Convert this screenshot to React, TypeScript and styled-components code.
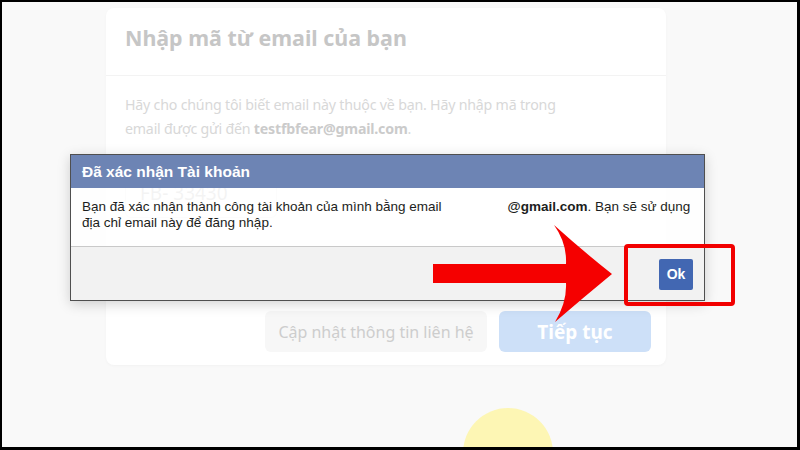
import React from "react";
import styled, { createGlobalStyle } from "styled-components";

const GlobalStyle = createGlobalStyle`
  html, body { margin: 0; padding: 0; background: #fff; }
  * { box-sizing: border-box; }
`;

const Frame = styled.div`
  position: relative;
  width: 800px;
  height: 450px;
  overflow: hidden;
  background: #f9f9f9;
  border-style: solid;
  border-color: #000;
  border-width: 2px 3px 3px 2px;
  font-family: "Noto Sans", "Open Sans", sans-serif;
`;

const Card = styled.div`
  margin: 6px 0 0 104px;
  width: 560px;
  height: 357px;
  background: #fff;
  border-radius: 8px;
  box-shadow: 0 1px 3px rgba(0, 0, 0, 0.03);
  display: flex;
  flex-direction: column;
`;

const CardHeader = styled.div`
  height: 68px;
  padding: 15px 19px 0;
  border-bottom: 1px solid #f3f3f3;
`;

const Heading = styled.h2`
  margin: 0;
  font-size: 21.4px;
  font-weight: 700;
  color: #c6c6c6;
`;

const CardBody = styled.div`
  flex: 1;
  padding: 17px 19px 0;
`;

const Paragraph = styled.p`
  margin: 0;
  font-size: 14.2px;
  letter-spacing: -0.2px;
  line-height: 24px;
  color: #d8d8d8;
  b { color: #cbcbcb; font-weight: 700; }
`;

const CodeInput = styled.div`
  margin-top: 27px;
  width: 152px;
  height: 50px;
  border: 1px solid #ededed;
  border-radius: 6px;
  padding-left: 14px;
  display: flex;
  align-items: center;
  font-size: 19px;
  color: #c4c4c4;
`;

const ButtonRow = styled.div`
  display: flex;
  justify-content: flex-end;
  gap: 12px;
  padding: 0 15px 13px;
`;

const Button = styled.div<{ $primary?: boolean }>`
  height: 41px;
  border-radius: 6px;
  display: flex;
  align-items: center;
  justify-content: center;
  padding: 0 8px;
  width: ${(p) => (p.$primary ? "152px" : "222px")};
  background: ${(p) => (p.$primary ? "#cde0f8" : "#f7f7f7")};
  color: ${(p) => (p.$primary ? "#fff" : "#cdcdcd")};
  font-size: ${(p) => (p.$primary ? "19px" : "16px")};
  font-weight: ${(p) => (p.$primary ? 700 : 400)};
`;

const CircleRow = styled.div`
  margin: 43px 0 0 461px;
`;

const Circle = styled.div`
  width: 90px;
  height: 90px;
  border-radius: 50%;
  background: #fdf6b4;
`;

const Dialog = styled.div`
  position: absolute;
  left: 68px;
  top: 152px;
  width: 635px;
  border: 1px solid #4f4f4f;
  box-shadow: 0 3px 12px rgba(0, 0, 0, 0.18);
  font-family: "Liberation Sans", Arial, sans-serif;
`;

const DialogHeader = styled.div`
  height: 33px;
  background: #6d84b4;
  color: #fff;
  font-size: 15.5px;
  font-weight: 700;
  padding: 0 11px;
  display: flex;
  align-items: center;
`;

const DialogBody = styled.div`
  height: 58px;
  background: rgba(255, 255, 255, 0.8);
  padding: 11px 11px 0;
  font-size: 13.5px;
  line-height: 16px;
  color: #1c1e21;
`;

const Line = styled.div`
  white-space: nowrap;
  b { font-weight: 700; }
`;

const Redacted = styled.span`
  display: inline-block;
  width: 66px;
`;

const DialogFooter = styled.div`
  height: 54px;
  background: #f2f2f2;
  border-top: 1px solid #c9c9c9;
  display: flex;
  align-items: center;
  justify-content: flex-end;
  padding: 0 11px 0 0;
`;

const OkButton = styled.div`
  width: 34px;
  height: 31px;
  background: #4267b2;
  border-radius: 2px;
  color: #fff;
  font-size: 14px;
  font-weight: 700;
  display: flex;
  align-items: center;
  justify-content: center;
  margin-top: 1px;
`;

const Highlight = styled.div`
  position: absolute;
  left: 622px;
  top: 242px;
  width: 111px;
  height: 62px;
  border: 4px solid #f20000;
  border-radius: 4px;
`;

const ArrowLayer = styled.svg`
  position: absolute;
  left: -2px;
  top: -2px;
  pointer-events: none;
`;

export default function App() {
  return (
    <>
      <GlobalStyle />
      <Frame>
        <Card>
          <CardHeader>
            <Heading>Nhập mã từ email của bạn</Heading>
          </CardHeader>
          <CardBody>
            <Paragraph>
              Hãy cho chúng tôi biết email này thuộc về bạn. Hãy nhập mã trong
              <br />
              email được gửi đến <b>testfbfear@gmail.com</b>.
            </Paragraph>
            <CodeInput>FB- 33430</CodeInput>
          </CardBody>
          <ButtonRow>
            <Button>Cập nhật thông tin liên hệ</Button>
            <Button $primary>Tiếp tục</Button>
          </ButtonRow>
        </Card>
        <CircleRow>
          <Circle />
        </CircleRow>

        <Dialog>
          <DialogHeader>Đã xác nhận Tài khoản</DialogHeader>
          <DialogBody>
            <Line>
              Bạn đã xác nhận thành công tài khoản của mình bằng email
              <Redacted />
              <b>@gmail.com</b>. Bạn sẽ sử dụng
            </Line>
            <Line>địa chỉ email này để đăng nhập.</Line>
          </DialogBody>
          <DialogFooter>
            <OkButton>Ok</OkButton>
          </DialogFooter>
        </Dialog>

        <Highlight />
        <ArrowLayer width="800" height="450" viewBox="0 0 800 450">
          <path
            d="M433 264 L566 264 Q567 243 554 225 Q584 252 612 274 Q584 297 555 322 Q567 302 566 283 L433 283 Z"
            fill="#f50000"
          />
        </ArrowLayer>
      </Frame>
    </>
  );
}
